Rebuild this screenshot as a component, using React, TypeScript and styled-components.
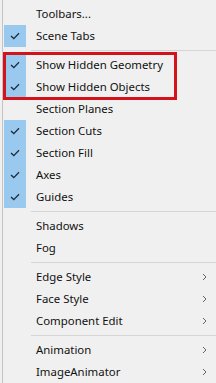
import React from "react";
import styled, { createGlobalStyle } from "styled-components";

const GlobalStyle = createGlobalStyle`
  html, body {
    margin: 0;
    padding: 0;
    background: #f0f0f0;
  }
  body {
    font-family: "Noto Sans", "Segoe UI", sans-serif;
    font-size: 11.4px;
    color: #111;
  }
`;

const MenuWrapper = styled.div`
  width: 214px;
  height: 383px;
  margin-left: 2px;
  padding-top: 3px;
  box-sizing: border-box;
  border-left: 1px solid #c4c4c4;
  background: #f0f0f0;
  overflow: hidden;
`;

const Row = styled.div`
  display: grid;
  grid-template-columns: 22px 1fr 14px;
  align-items: center;
  height: 22px;
  padding-left: 1px;
  column-gap: 10px;
`;

const CheckCell = styled.div<{ $on?: boolean }>`
  width: 22px;
  height: 22px;
  display: flex;
  align-items: center;
  justify-content: center;
  background: ${(p) => (p.$on ? "#99c9ef" : "transparent")};
`;

const Label = styled.span`
  white-space: nowrap;
  line-height: 22px;
`;

const Arrow = styled.div`
  display: flex;
  align-items: center;
  justify-content: flex-start;
`;

const Separator = styled.div`
  height: 7px;
  display: flex;
  align-items: center;
  padding-left: 28px;
  &::after {
    content: "";
    flex: 1;
    height: 1px;
    background: #d5d5d5;
  }
`;

const Highlight = styled.div`
  position: relative;
  &::after {
    content: "";
    position: absolute;
    left: 0;
    top: -2px;
    width: 174px;
    height: 48px;
    box-sizing: border-box;
    border: 3px solid #d3121c;
    pointer-events: none;
  }
`;

const CheckMark = () => (
  <svg width="10" height="8" viewBox="0 0 10 8">
    <path d="M1 4 L3.8 6.6 L9 1.2" fill="none" stroke="#1e2d3d" strokeWidth="1.3" />
  </svg>
);

const Chevron = () => (
  <svg width="5" height="8" viewBox="0 0 5 8">
    <path d="M1 1 L4 4 L1 7" fill="none" stroke="#555" strokeWidth="0.9" />
  </svg>
);

type Item = { label: string; checked?: boolean; sub?: boolean };

const MenuItem = ({ label, checked, sub }: Item) => (
  <Row>
    <CheckCell $on={checked}>{checked && <CheckMark />}</CheckCell>
    <Label>{label}</Label>
    <Arrow>{sub && <Chevron />}</Arrow>
  </Row>
);

export default function App() {
  return (
    <>
      <GlobalStyle />
      <MenuWrapper>
        <MenuItem label="Toolbars..." />
        <MenuItem label="Scene Tabs" checked />
        <Separator />
        <Highlight>
          <MenuItem label="Show Hidden Geometry" checked />
          <MenuItem label="Show Hidden Objects" checked />
        </Highlight>
        <MenuItem label="Section Planes" />
        <MenuItem label="Section Cuts" checked />
        <MenuItem label="Section Fill" checked />
        <MenuItem label="Axes" checked />
        <MenuItem label="Guides" checked />
        <Separator />
        <MenuItem label="Shadows" />
        <MenuItem label="Fog" />
        <Separator />
        <MenuItem label="Edge Style" sub />
        <MenuItem label="Face Style" sub />
        <MenuItem label="Component Edit" sub />
        <Separator />
        <MenuItem label="Animation" sub />
        <MenuItem label="ImageAnimator" sub />
      </MenuWrapper>
    </>
  );
}
